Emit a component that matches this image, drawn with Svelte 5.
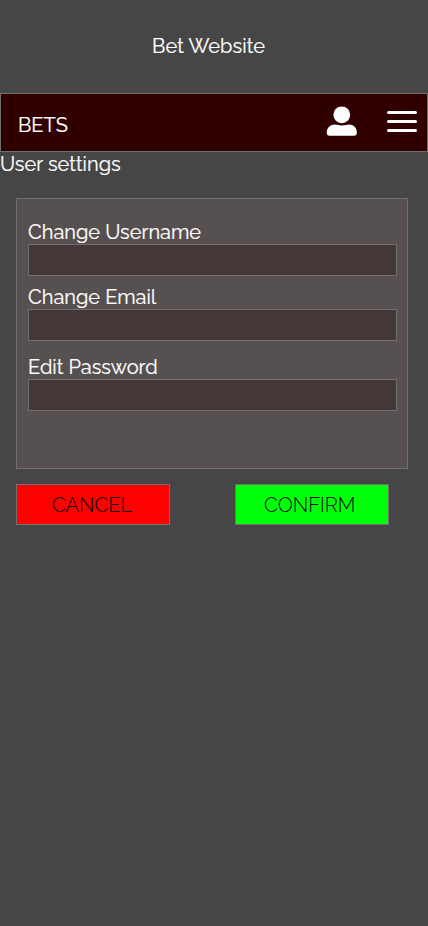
<script>
  const fields = [
    { id: 'username', label: 'Change Username', type: 'text' },
    { id: 'email', label: 'Change Email', type: 'email' },
    { id: 'password', label: 'Edit Password', type: 'password' }
  ];
</script>

<main>
  <header><h1>Bet Website</h1></header>
  <nav>
    <span class="bets">BETS</span>
    <button class="icon user" aria-label="Account">
      <svg width="30" height="30" viewBox="0 0 30 30" fill="#fff">
        <circle cx="14.8" cy="8.8" r="8.4" />
        <path d="M8 18.6C10.5 18.6 11.5 19.6 15 19.6S19.5 18.6 22 18.6C26.5 18.6 29.8 21.8 29.8 26.2V27Q29.8 29.8 27 29.8H2.6Q-.2 29.8 -.2 27V26.2C-.2 21.8 3.5 18.6 8 18.6Z" />
      </svg>
    </button>
    <button class="icon menu" aria-label="Menu">
      <i></i><i></i><i></i>
    </button>
  </nav>
  <h2>User settings</h2>
  <form class="card">
    {#each fields as field}
      <div class="field {field.id}">
        <label for={field.id}><span>{field.label}</span></label>
        <input id={field.id} type={field.type} />
      </div>
    {/each}
  </form>
  <div class="actions">
    <button class="cancel"><span>CANCEL</span></button>
    <button class="confirm"><span>CONFIRM</span></button>
  </div>
</main>

<style>
  :global(body) { background: #464646; }
  main {
    min-height: 926px;
    background: #464646;
    color: #fff;
    font: 400 20px/24px Raleway, Lato, sans-serif;
    -webkit-text-stroke: 0.2px #fff;
    overflow: hidden;
  }
  h1, h2 { margin: 0; font: inherit; white-space: nowrap; }
  header { height: 93px; box-sizing: border-box; padding: 34px 0 0 152px; }
  h1 { letter-spacing: 0.1px; }
  nav {
    height: 59px;
    box-sizing: border-box;
    border: 1px solid #707070;
    background: #300000;
    display: flex;
    align-items: flex-start;
    padding: 0 10px 0 17px;
  }
  .bets { margin-top: 19px; }
  button { font: inherit; padding: 0; cursor: pointer; }
  .icon { border: 0; background: none; display: flex; }
  svg { overflow: visible; }
  .user { margin: 12px 30px 0 auto; }
  .menu { flex-direction: column; gap: 6px; margin-top: 17px; }
  .menu i { width: 30px; height: 3px; border-radius: 1.5px; background: #fff; }
  h2 { height: 24px; }
  .card {
    box-sizing: border-box;
    width: 392px;
    height: 271px;
    margin: 22px 0 0 16px;
    padding: 21px 10px 0 11px;
    border: 1px solid #707070;
    background: #575050;
  }
  .field { height: 65px; }
  .email { height: 70px; }
  label { display: block; height: 24px; white-space: nowrap; }
  input {
    display: block;
    box-sizing: border-box;
    width: 369px;
    height: 32px;
    margin: 0;
    padding: 0 8px;
    border: 1px solid #707070;
    border-radius: 0;
    background: #433737;
    color: #fff;
    font: inherit;
    outline: 0;
  }
  .actions { display: flex; gap: 65px; margin: 15px 0 0 16px; }
  .actions button {
    box-sizing: border-box;
    width: 154px;
    height: 41px;
    border: 1px solid #707070;
    color: #000;
    font-weight: 300;
    -webkit-text-stroke: 0;
    text-align: left;
  }
  .cancel { background: #f00; padding-left: 35px; }
  .confirm { background: #00ff0a; padding-left: 28px; }
</style>
